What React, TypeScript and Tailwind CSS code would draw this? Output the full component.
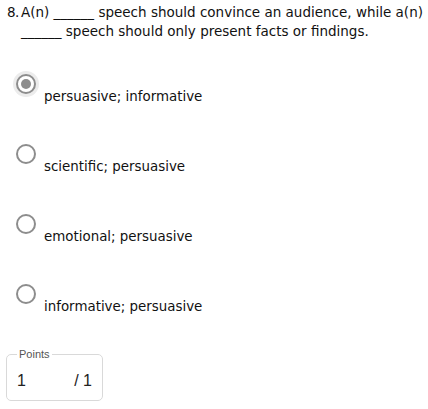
const options = [
  { label: "persuasive; informative", selected: true },
  { label: "scientific; persuasive", selected: false },
  { label: "emotional; persuasive", selected: false },
  { label: "informative; persuasive", selected: false },
];

const Radio = ({ selected }: { selected: boolean }) => (
  <span
    className={
      "flex h-[20px] w-[20px] shrink-0 items-center justify-center rounded-full border-2 border-[#8d8d8d] bg-white " +
      (selected ? "shadow-[0_0_0_3px_#ececec]" : "")
    }
  >
    {selected && <span className="h-[10px] w-[10px] rounded-full bg-[#8d8d8d]" />}
  </span>
);

const Option = ({ label, selected }: { label: string; selected: boolean }) => (
  <div className="flex h-[70px] items-start pl-[16px]">
    <Radio selected={selected} />
    <span className="ml-[8px] pt-[13px] text-[13.4px] leading-[20px] text-[#111]">{label}</span>
  </div>
);

const App = () => {
  return (
    <div className="h-[409px] w-[428px] bg-white font-['DejaVu_Sans',Verdana,sans-serif]">
      <div className="flex pl-[7px] pt-[3px] text-[13.5px] leading-[19px] text-[#111]">
        <span className="w-[14px] shrink-0 tracking-[-0.5px]">8.</span>
        <p>
          A(n) ______ speech should convince an audience, while a(n) ______ speech should only present facts or findings.
        </p>
      </div>
      <div className="mt-[33px]">
        {options.map((o) => (
          <Option key={o.label} label={o.label} selected={o.selected} />
        ))}
      </div>
      <div className="ml-[6px] mt-[-6px] w-[97px]">
        <fieldset className="h-[53px] rounded-[5px] border border-[#d9d9d9] px-[9px] font-['Liberation_Sans',Arial,sans-serif]">
          <legend className="ml-[1px] px-[2px] text-[11px] leading-[12px] text-[#555]">Points</legend>
          <div className="mt-[9px] flex items-center justify-between pr-[1px] text-[16px] text-[#222]">
            <span className="pl-[1px]">1</span>
            <span>/ 1</span>
          </div>
        </fieldset>
      </div>
    </div>
  );
};

export default App;
